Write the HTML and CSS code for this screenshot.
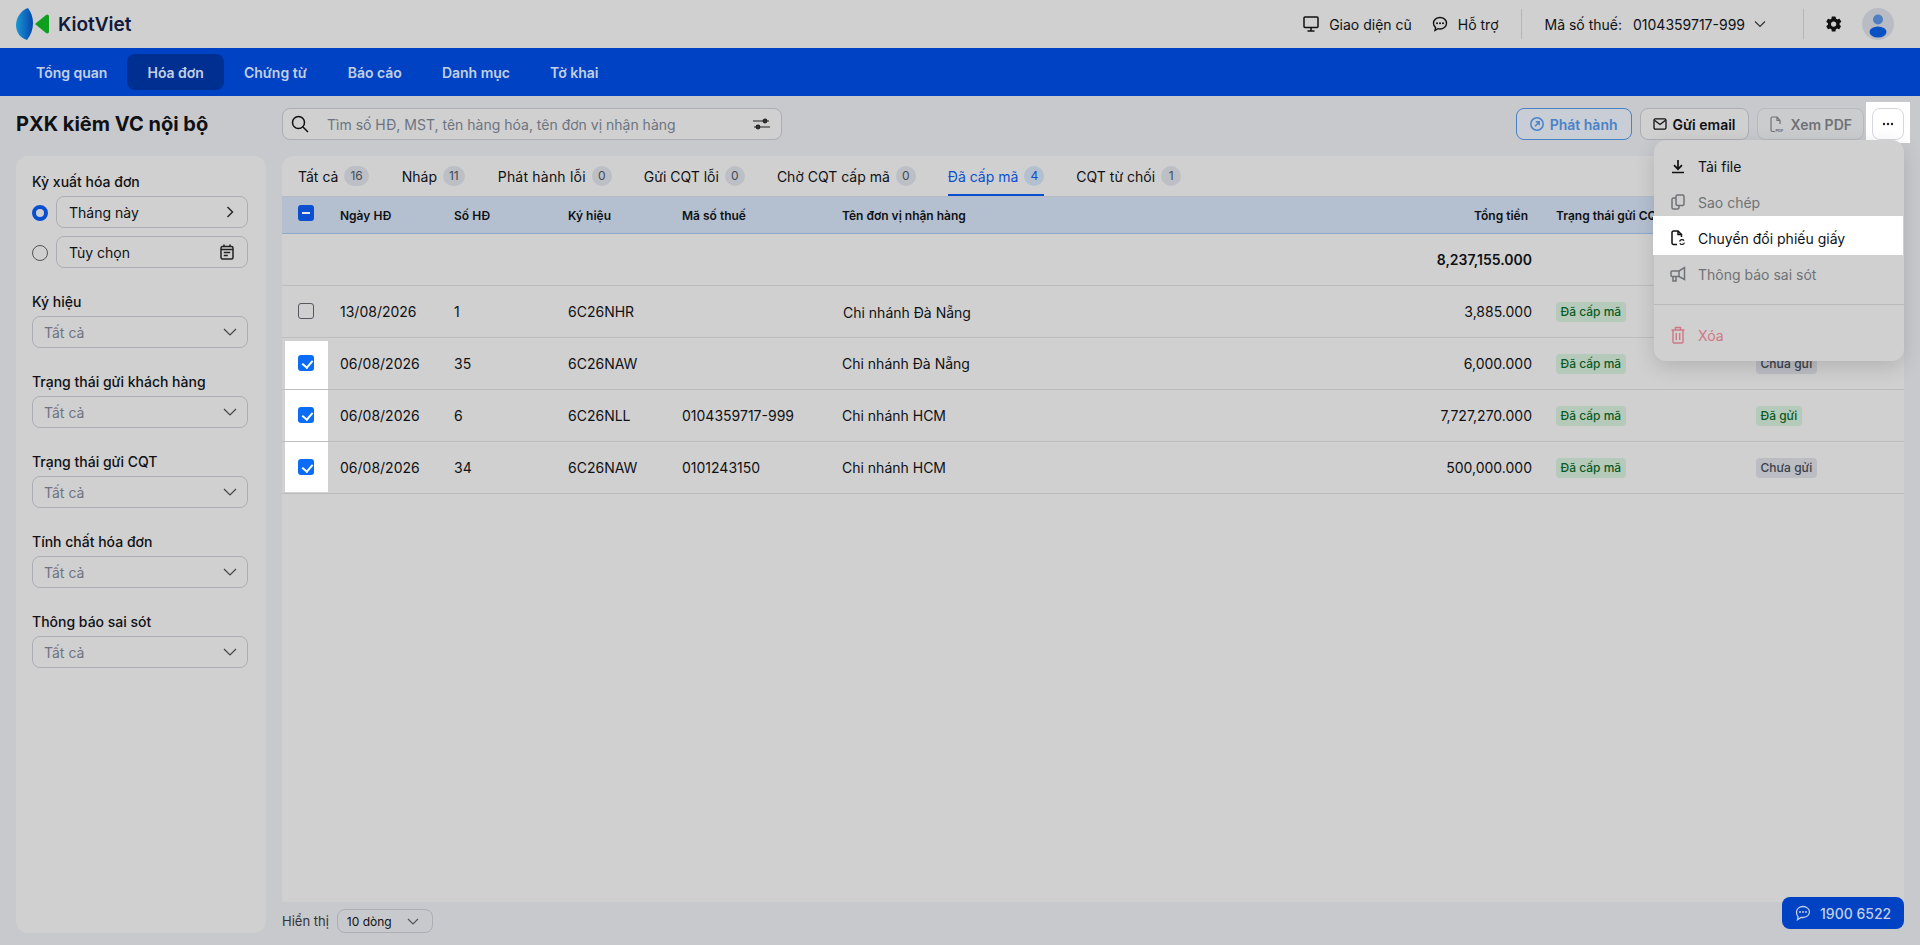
FILE: index.html
```html
<!DOCTYPE html>
<html lang="vi">
<head>
  <meta charset="utf-8">
  <title>Hóa đơn</title>
  <link rel="stylesheet" href="styles.css">
</head>
<body>
  <div class="header">
    <div class="logo">
      <svg width="34" height="32" viewBox="0 0 34 32" fill="none">
        <defs>
          <linearGradient id="logoBlue" x1="0" y1="0" x2="1" y2="0">
            <stop offset="0" stop-color="#1b97d4"/>
            <stop offset="1" stop-color="#0547ad"/>
          </linearGradient>
        </defs>
        <path d="M12 0C5 2 0 10 0 17c0 7 4 13 11 15 4-5 6-11 6-17S15 4 12 0z" fill="url(#logoBlue)"/>
        <path d="M19 16L30 7c2-1.5 3 0 3 2v14c0 2.5-1.500 3-3 2z" fill="#0f9f1f"/>
      </svg>
      <span>KiotViet</span>
    </div>
    <div class="header-right">
      <div class="header-link">
        <svg width="16" height="16" viewBox="0 0 16 16" fill="none" stroke="#111" stroke-width="1.5">
          <rect x="1" y="1" width="14" height="10.5" rx="1"/>
          <path d="M8 12v2.5M4.500 15h7"/>
        </svg>
        Giao diện cũ
      </div>
      <div class="header-link support">
        <svg width="16" height="16" viewBox="0 0 16 16" fill="none" stroke="#111" stroke-width="1.4">
          <path d="M8 1.5c3.600 0 6.500 2.500 6.500 5.700S11.600 13 8 13c-.7 0-1.300-.1-2-.3l-3 1.600.6-2.700C2.300 10.500 1.500 9 1.500 7.200 1.500 4 4.400 1.500 8 1.500z"/>
          <path d="M5 7.2h.01M8 7.2h.01M11 7.2h.01" stroke-width="2" stroke-linecap="round"/>
        </svg>
        Hỗ trợ
      </div>
      <div class="tax">
        <span>Mã số thuế:</span>
        <span class="tax-value">0104359717-999</span>
        <svg width="12" height="8" viewBox="0 0 12 8" fill="none" stroke="#333" stroke-width="1.2"><path d="M1 1.5l5 5 5-5"/></svg>
      </div>
      <div class="header-user">
        <svg width="18" height="18" viewBox="0 0 24 24" fill="#111">
          <path d="M19.400 13c.1-.3.100-.7.100-1s0-.7-.1-1l2.100-1.600c.2-.2.200-.4.100-.6l-2-3.500c-.1-.2-.4-.3-.6-.2l-2.500 1c-.5-.4-1.100-.7-1.700-1L14 2.400c0-.2-.2-.4-.5-.4h-4c-.2 0-.5.200-.5.400l-.4 2.700c-.6.200-1.200.6-1.700 1l-2.500-1c-.2-.1-.5 0-.6.200l-2 3.500c-.1.200 0 .4.100.6L4 11c0 .3-.1.700-.1 1s0 .7.100 1l-2.100 1.600c-.2.200-.2.400-.1.600l2 3.500c.1.200.4.300.6.200l2.500-1c.5.400 1.100.7 1.700 1l.4 2.700c0 .2.300.4.500.4h4c.3 0 .5-.2.500-.4l.4-2.700c.6-.2 1.200-.6 1.700-1l2.500 1c.2.100.5 0 .6-.2l2-3.500c.1-.2.100-.4-.1-.6zM11.500 15.500a3.500 3.500 0 1 1 0-7 3.500 3.500 0 0 1 0 7z"/>
        </svg>
        <div class="avatar">
          <svg width="32" height="32" viewBox="0 0 32 32">
            <circle cx="16" cy="11.5" r="5" fill="#4f7fc0"/>
            <ellipse cx="16" cy="24" rx="8.5" ry="5.5" fill="#0a52c4"/>
          </svg>
        </div>
      </div>
    </div>
  </div>

  <div class="nav">
    <a class="nav-item">Tổng quan</a>
    <a class="nav-item active">Hóa đơn</a>
    <a class="nav-item">Chứng từ</a>
    <a class="nav-item">Báo cáo</a>
    <a class="nav-item">Danh mục</a>
    <a class="nav-item">Tờ khai</a>
  </div>

  <div class="page">
    <div class="toolbar">
      <h1 class="title">PXK kiêm VC nội bộ</h1>
      <div class="search">
        <svg width="18" height="18" viewBox="0 0 18 18" fill="none" stroke="#111" stroke-width="1.5">
          <circle cx="7.5" cy="7.5" r="6"/><path d="M12 12l5 5"/>
        </svg>
        <span class="search-text">Tìm số HĐ, MST, tên hàng hóa, tên đơn vị nhận hàng</span>
        <svg width="17" height="12" viewBox="0 0 17 12" fill="#333" stroke="#222" stroke-width="1.2">
          <path d="M0 3h16M1 9h16"/><circle cx="12" cy="3" r="1.8"/><circle cx="5" cy="9" r="1.8"/>
        </svg>
      </div>
      <div class="actions">
        <button class="btn btn-primary">
          <svg width="14" height="14" viewBox="0 0 14 14" fill="none" stroke="#4a82c8" stroke-width="1.5">
            <circle cx="7" cy="7" r="6.2"/><path d="M5 9.200L9 5.200M5.800 4.800h3.400v3.400" stroke-width="1.4"/>
          </svg>
          Phát hành
        </button>
        <button class="btn">
          <svg width="14" height="12" viewBox="0 0 15 13" fill="none" stroke="#111" stroke-width="1.4">
            <rect x="1" y="1" width="13" height="11" rx="1.5"/><path d="M1.500 2.500l6 4.500 6-4.500"/>
          </svg>
          Gửi email
        </button>
        <button class="btn btn-disabled">
          <svg width="15" height="17" viewBox="0 0 15 17" fill="none" stroke="#6f7276" stroke-width="1.2">
            <path d="M5 15.500H2.500c-.8 0-1.500-.7-1.500-1.500V2.500C1 1.700 1.700 1 2.500 1H7l3 3.500V8"/><path d="M7 1v3.500h3"/>
            <text x="5.5" y="15.5" class="pdf-mark">PDF</text>
          </svg>
          Xem PDF
        </button>
        <div class="more-wrap">
          <button class="btn-more">
            <svg width="12" height="4" viewBox="0 0 12 4" fill="#222"><circle cx="2" cy="2" r="1.2"/><circle cx="6" cy="2" r="1.2"/><circle cx="10" cy="2" r="1.2"/></svg>
          </button>
          <div class="menu">
            <div class="menu-item">
              <svg width="16" height="18" viewBox="0 0 16 18" fill="none" stroke="#111" stroke-width="1.7">
                <path d="M8 3v9M4 8.200L8 12.200l4-4M2 15.500h12"/>
              </svg>
              Tải file
            </div>
            <div class="menu-item muted">
              <svg width="16" height="18" viewBox="0 0 16 18" fill="none" stroke="#6f7276" stroke-width="1.5">
                <rect x="6" y="2" width="8" height="10.500" rx="1.5"/>
                <path d="M6 5H3.500C2.600 5 2 5.600 2 6.500v8c0 .9.600 1.500 1.500 1.500h4c.9 0 1.500-.6 1.500-1.500v-2"/>
              </svg>
              Sao chép
            </div>
            <div class="menu-item current">
              <svg width="16" height="18" viewBox="0 0 16 18" fill="none" stroke="#111" stroke-width="1.5">
                <path d="M7 15.500H3.500c-.8 0-1.500-.7-1.500-1.500V3.500C2 2.700 2.700 2 3.500 2H8l3.500 3.500V8"/>
                <path d="M8 2v3.500h3.500"/>
                <path d="M9.600 12.500a2.500 2.500 0 0 1 4.500-.8M14.400 13.600a2.500 2.500 0 0 1-4.500.8" stroke-width="1.2"/>
              </svg>
              Chuyển đổi phiếu giấy
            </div>
            <div class="menu-item muted">
              <svg width="16" height="18" viewBox="0 0 16 18" fill="none" stroke="#6f7276" stroke-width="1.5">
                <path d="M14.500 2.500v12L9 11.500H2c-.5 0-1-.4-1-1V7c0-.6.500-1 1-1h7z"/>
                <path d="M9 6v5.500M3 11.500V16h3v-4.500"/>
              </svg>
              Thông báo sai sót
            </div>
            <div class="menu-divider"></div>
            <div class="menu-item danger">
              <svg width="16" height="18" viewBox="0 0 16 18" fill="none" stroke="#d17784" stroke-width="1.4">
                <path d="M1.500 4h13M5.500 4V1.500h5V4M3 4v12c0 .6.400 1 1 1h8c.6 0 1-.4 1-1V4M6.300 7v7M9.700 7v7"/>
              </svg>
              Xóa
            </div>
          </div>
        </div>
      </div>
    </div>

    <div class="layout">
      <div class="sidebar">
        <div class="filter-label">Kỳ xuất hóa đơn</div>
        <div class="period">
          <span class="radio checked"></span>
          <div class="field">
            Tháng này
            <svg width="8" height="12" viewBox="0 0 8 12" fill="none" stroke="#222" stroke-width="1.4"><path d="M1.500 1l5 5-5 5"/></svg>
          </div>
        </div>
        <div class="period">
          <span class="radio"></span>
          <div class="field">
            Tùy chọn
            <svg width="14" height="16" viewBox="0 0 14 16" fill="none" stroke="#222" stroke-width="1.5">
              <rect x="1" y="2.500" width="12" height="12.500" rx="1.5"/>
              <path d="M1 5.500h12M4 .5v2M10 .5v2M3.800 8.500h6.400M3.800 11.500h4"/>
            </svg>
          </div>
        </div>

        <div class="filter-label spaced">Ký hiệu</div>
        <div class="select">Tất cả<svg width="14" height="8" viewBox="0 0 14 8" fill="none" stroke="#444" stroke-width="1.2"><path d="M1 1l6 6 6-6"/></svg></div>
        <div class="filter-label spaced">Trạng thái gửi khách hàng</div>
        <div class="select">Tất cả<svg width="14" height="8" viewBox="0 0 14 8" fill="none" stroke="#444" stroke-width="1.2"><path d="M1 1l6 6 6-6"/></svg></div>
        <div class="filter-label spaced">Trạng thái gửi CQT</div>
        <div class="select">Tất cả<svg width="14" height="8" viewBox="0 0 14 8" fill="none" stroke="#444" stroke-width="1.2"><path d="M1 1l6 6 6-6"/></svg></div>
        <div class="filter-label spaced">Tính chất hóa đơn</div>
        <div class="select">Tất cả<svg width="14" height="8" viewBox="0 0 14 8" fill="none" stroke="#444" stroke-width="1.2"><path d="M1 1l6 6 6-6"/></svg></div>
        <div class="filter-label spaced">Thông báo sai sót</div>
        <div class="select">Tất cả<svg width="14" height="8" viewBox="0 0 14 8" fill="none" stroke="#444" stroke-width="1.2"><path d="M1 1l6 6 6-6"/></svg></div>
      </div>

      <div class="main">
        <div class="card">
          <div class="tabs">
            <div class="tab tab-pad">Tất cả <span class="count">16</span></div>
            <div class="tab tab-pad">Nháp <span class="count">11</span></div>
            <div class="tab tab-loose">Phát hành lỗi <span class="count">0</span></div>
            <div class="tab">Gửi CQT lỗi <span class="count">0</span></div>
            <div class="tab">Chờ CQT cấp mã <span class="count">0</span></div>
            <div class="tab active">Đã cấp mã <span class="count">4</span></div>
            <div class="tab">CQT từ chối <span class="count">1</span></div>
          </div>
          <table class="grid">
            <colgroup>
              <col class="col-check"><col class="col-date"><col class="col-num"><col class="col-sign">
              <col class="col-tax"><col class="col-name"><col class="col-total"><col class="col-cqt"><col class="col-kh">
            </colgroup>
            <thead>
              <tr>
                <th><span class="check partial"></span></th>
                <th>Ngày HĐ</th>
                <th>Số HĐ</th>
                <th>Ký hiệu</th>
                <th>Mã số thuế</th>
                <th>Tên đơn vị nhận hàng</th>
                <th class="amount head-amount">Tổng tiền</th>
                <th>Trạng thái gửi CQT</th>
                <th>Trạng thái gửi KH</th>
              </tr>
            </thead>
            <tbody>
              <tr class="total-row">
                <td></td><td></td><td></td><td></td><td></td><td></td>
                <td class="amount">8,237,155.000</td>
                <td></td><td></td>
              </tr>
              <tr>
                <td><span class="check"></span></td>
                <td>13/08/2026</td><td>1</td><td>6C26NHR</td><td></td>
                <td class="name-first">Chi nhánh Đà Nẵng</td>
                <td class="amount">3,885.000</td>
                <td><span class="badge green">Đã cấp mã</span></td>
                <td><span class="badge gray">Chưa gửi</span></td>
              </tr>
              <tr>
                <td class="spot spot-top"><span class="check on"></span></td>
                <td>06/08/2026</td><td>35</td><td>6C26NAW</td><td></td>
                <td>Chi nhánh Đà Nẵng</td>
                <td class="amount">6,000.000</td>
                <td><span class="badge green">Đã cấp mã</span></td>
                <td><span class="badge gray">Chưa gửi</span></td>
              </tr>
              <tr>
                <td class="spot"><span class="check on"></span></td>
                <td>06/08/2026</td><td>6</td><td>6C26NLL</td><td>0104359717-999</td>
                <td>Chi nhánh HCM</td>
                <td class="amount">7,727,270.000</td>
                <td><span class="badge green">Đã cấp mã</span></td>
                <td><span class="badge green">Đã gửi</span></td>
              </tr>
              <tr>
                <td class="spot spot-bottom"><span class="check on"></span></td>
                <td>06/08/2026</td><td>34</td><td>6C26NAW</td><td>0101243150</td>
                <td>Chi nhánh HCM</td>
                <td class="amount">500,000.000</td>
                <td><span class="badge green">Đã cấp mã</span></td>
                <td><span class="badge gray">Chưa gửi</span></td>
              </tr>
            </tbody>
          </table>
        </div>
        <div class="pager">
          <span class="pager-label">Hiển thị</span>
          <div class="page-size">10 dòng<svg width="12" height="7" viewBox="0 0 12 7" fill="none" stroke="#555" stroke-width="1.2"><path d="M1 1l5 5 5-5"/></svg></div>
        </div>
      </div>
    </div>
  </div>

  <div class="hotline">
    <svg width="16" height="16" viewBox="0 0 16 16" fill="none" stroke="#c3cfe3" stroke-width="1.3">
      <path d="M8 1.500c3.600 0 6.500 2.500 6.500 5.500S11.600 12.500 8 12.500H6l-3.500 2.200.6-3C2 10.700 1.500 9 1.500 7 1.500 4 4.400 1.500 8 1.500z"/>
      <path d="M5 7h.01M8 7h.01M11 7h.01" stroke-width="2" stroke-linecap="round"/>
    </svg>
    1900 6522
  </div>
</body>
</html>
```

FILE: styles.css
```css
:root {
  --page-bg: #c8c9cc;
  --panel-bg: #d0d0d0;
  --blue: #0042c4;
  --blue-dark: #002f92;
  --text: #0f1115;
  --line: #bcbdbf;
  --field-border: #abaeb4;
  --muted: #6f7276;
}

* {
  box-sizing: border-box;
}

html, body {
  height: 100%;
}

body {
  margin: 0;
  height: 945px;
  overflow: hidden;
  background: var(--page-bg);
  color: var(--text);
  font-family: Inter, "Noto Sans", sans-serif;
  font-size: 14px;
}

/* top bar */
.header {
  display: flex;
  align-items: center;
  justify-content: space-between;
  height: 48px;
  padding: 0 26px 0 16px;
  background: var(--panel-bg);
}

.logo {
  display: flex;
  align-items: center;
  gap: 8px;
  color: #101a3a;
  font-size: 19px;
  font-weight: 600;
}

.header-right {
  display: flex;
  align-items: center;
}

.header-link {
  display: flex;
  align-items: center;
  gap: 10px;
}

.support {
  margin-left: 20px;
  padding-right: 22px;
}

.tax {
  display: flex;
  align-items: center;
  height: 30px;
  padding: 0 37px 0 23px;
  border-left: 1px solid #b5b6b8;
  border-right: 1px solid #b5b6b8;
}

.tax-value {
  margin: 0 9px 0 11px;
}

.header-user {
  display: flex;
  align-items: center;
  gap: 19px;
  margin-left: 21px;
}

.avatar {
  width: 32px;
  height: 32px;
  border-radius: 50%;
  background: #b9bcc2;
}

/* blue nav */
.nav {
  display: flex;
  align-items: center;
  height: 48px;
  padding: 0 16px;
  background: var(--blue);
}

.nav-item {
  display: flex;
  align-items: center;
  height: 36px;
  padding: 0 20px;
  border-radius: 8px;
  color: #c4cfe3;
  font-weight: 600;
}

.nav-item:nth-child(3) {
  padding-right: 21px;
}

.nav-item.active {
  background: var(--blue-dark);
}

/* page */
.page {
  padding: 12px 16px;
}

.toolbar {
  display: flex;
  align-items: center;
  height: 32px;
}

.title {
  width: 266px;
  margin: 0;
  font-size: 20px;
  font-weight: 700;
  white-space: nowrap;
}

.search {
  display: flex;
  align-items: center;
  width: 500px;
  height: 32px;
  padding: 0 11px 0 8px;
  border: 1px solid var(--field-border);
  border-radius: 8px;
  background: var(--panel-bg);
}

.search-text {
  flex: 1;
  margin-left: 18px;
  color: #6d7480;
}

.actions {
  display: flex;
  align-items: center;
  gap: 8px;
  margin-left: auto;
}

.btn {
  display: flex;
  align-items: center;
  gap: 6px;
  height: 32px;
  padding: 0 12px;
  border: 1px solid var(--field-border);
  border-radius: 8px;
  background: var(--panel-bg);
  color: var(--text);
  font: 600 14px Inter, sans-serif;
}

.btn-primary {
  padding: 0 13px;
  border-color: #4a82c8;
  background: #c8cdd6;
  color: #4a82c8;
}

.btn-disabled {
  padding-right: 11px;
  color: var(--muted);
  border-color: #b8babe;
  background: #cbccce;
}

.pdf-mark {
  fill: #6f7276;
  stroke: none;
  font-size: 4px;
  font-weight: 700;
}

.more-wrap {
  position: relative;
}

.more-wrap::before {
  content: "";
  position: absolute;
  left: -6px;
  right: -6px;
  top: -6px;
  bottom: -3px;
  background: #fff;
}

.btn-more {
  position: relative;
  display: flex;
  align-items: center;
  justify-content: center;
  width: 32px;
  height: 32px;
  padding: 0;
  border: 1px solid #d5d9df;
  border-radius: 8px;
  background: #fff;
}

/* dropdown */
.menu {
  position: absolute;
  top: 100%;
  right: 0;
  z-index: 5;
  width: 250px;
  height: 221px;
  padding-top: 8px;
  border-radius: 12px;
  background: var(--panel-bg);
  box-shadow: 0 6px 20px rgba(0, 0, 0, 0.14);
}

.menu-item {
  display: flex;
  align-items: center;
  gap: 12px;
  height: 36px;
  padding-left: 16px;
}

.menu-item.muted {
  color: var(--muted);
}

.menu-item.current {
  height: 39px;
  margin: -4px 1px 1px -1px;
  padding: 5px 0 0 17px;
  background: #fff;
}

.menu-item.danger {
  color: #d17784;
}

.menu-divider {
  height: 1px;
  margin: 12px 0;
  background: #b9babc;
}

/* columns */
.layout {
  display: grid;
  grid-template-columns: 250px 1fr;
  gap: 16px;
  margin-top: 16px;
}

.sidebar {
  height: 777px;
  padding: 16px 18px 0 16px;
  border-radius: 12px;
  background: var(--panel-bg);
}

.filter-label {
  height: 20px;
  margin-bottom: 4px;
  font-weight: 500;
  line-height: 20px;
}

.filter-label.spaced {
  margin-top: 24px;
  margin-bottom: 4px;
}

.period {
  display: flex;
  align-items: center;
  gap: 8px;
  margin-bottom: 8px;
}

.radio {
  flex: none;
  width: 16px;
  height: 16px;
  margin-top: 1px;
  border: 1px solid #555;
  border-radius: 50%;
}

.radio.checked {
  border: 4px solid #0a4fd0;
}

.field, .select {
  display: flex;
  align-items: center;
  justify-content: space-between;
  height: 32px;
  padding: 0 10px 0 11px;
  border: 1px solid var(--field-border);
  border-radius: 8px;
}

.field {
  flex: 1;
  padding: 0 13px 0 12px;
}

.select {
  color: #6d7480;
}

.main {
  display: flex;
  flex-direction: column;
}

.card {
  height: 746px;
  overflow: hidden;
  border-radius: 12px 12px 0 0;
  background: var(--panel-bg);
}

.tabs {
  display: flex;
  gap: 32px;
  height: 40px;
  padding: 0 16px;
}

.tab {
  position: relative;
  display: flex;
  align-items: center;
  gap: 6px;
  height: 40px;
}

.tab-pad {
  margin-right: 1px;
}

.tab-loose {
  letter-spacing: 0.2px;
}

.tab.active {
  color: #0a4fd0;
}

.tab.active::after {
  content: "";
  position: absolute;
  left: 0;
  right: 0;
  bottom: 0;
  height: 2px;
  background: #0a4fd0;
}

.count {
  min-width: 20px;
  height: 20px;
  padding: 0 6px;
  border-radius: 10px;
  background: #bcbfc5;
  color: #444a55;
  font-size: 12px;
  line-height: 20px;
  text-align: center;
}

.tab.active .count {
  background: #b4c0d0;
  color: #0a4fd0;
}

/* table */
.grid {
  width: 100%;
  border-collapse: collapse;
  table-layout: fixed;
}

.col-check { width: 46px; }
.col-date, .col-num, .col-sign { width: 114px; }
.col-tax { width: 160px; }
.col-total { width: 144px; }
.col-cqt { width: 200px; }
.col-kh { width: 160px; }

.grid th {
  height: 37px;
  padding: 0 12px;
  border-top: 1px solid #b8bcc2;
  border-bottom: 1px solid #8ea8cc;
  background: #b4c0d0;
  font-size: 12px;
  font-weight: 600;
  text-align: left;
  white-space: nowrap;
}

.grid td {
  position: relative;
  height: 52px;
  padding: 0 12px;
  border-bottom: 1px solid var(--line);
}

.grid th:first-child, .grid td:first-child {
  padding: 0 0 0 16px;
}

.grid .amount {
  text-align: right;
}

.grid .head-amount {
  padding-right: 16px;
}

.total-row td {
  font-weight: 600;
}

.name-first {
  padding-top: 2px !important;
  padding-left: 13px !important;
}

/* spotlighted checkbox cells */
.spot::before {
  content: "";
  position: absolute;
  top: 0;
  bottom: 0;
  left: 3px;
  right: 0;
  background: #fff;
}

.spot-top::before {
  top: 3px;
}

.spot-bottom::before {
  bottom: 1px;
}

.check {
  position: relative;
  display: block;
  width: 16px;
  height: 16px;
  margin-top: -2px;
  border: 1px solid #55585e;
  border-radius: 3px;
}

.check.on, .check.partial {
  border: 0;
  background: #0b6cf5;
}

.check.partial {
  margin-top: -4px;
  background: #0a4fd0;
}

.check.partial::after {
  content: "";
  position: absolute;
  top: 7px;
  left: 4px;
  width: 8px;
  height: 2px;
  background: #e2e8f2;
}

.check.on::after {
  content: "";
  position: absolute;
  top: 3px;
  left: 5.5px;
  width: 5px;
  height: 8px;
  border: solid #fff;
  border-width: 0 2px 2px 0;
  transform: rotate(40deg);
}

.badge {
  display: inline-block;
  height: 20px;
  padding: 0 4.5px;
  border-radius: 4px;
  font-size: 12px;
  font-weight: 500;
  line-height: 20px;
}

.badge.green {
  background: #b6cabb;
  color: #0b5a24;
}

.badge.gray {
  background: #bbbdc2;
  color: #3a3f4a;
}

/* footer */
.pager {
  display: flex;
  align-items: center;
  gap: 8px;
  height: 24px;
  margin-top: 7px;
  color: #333;
  font-size: 12px;
}

.pager-label {
  font-size: 13px;
}

.page-size {
  display: flex;
  align-items: center;
  justify-content: space-between;
  width: 96px;
  height: 24px;
  padding: 0 13px 0 9px;
  border: 1px solid var(--field-border);
  border-radius: 8px;
  color: var(--text);
}

.hotline {
  position: fixed;
  right: 16px;
  bottom: 16px;
  display: flex;
  align-items: center;
  gap: 9px;
  width: 122px;
  height: 32px;
  padding-left: 13px;
  border-radius: 8px;
  background: var(--blue);
  color: #c3cfe3;
  font-weight: 500;
}
```
